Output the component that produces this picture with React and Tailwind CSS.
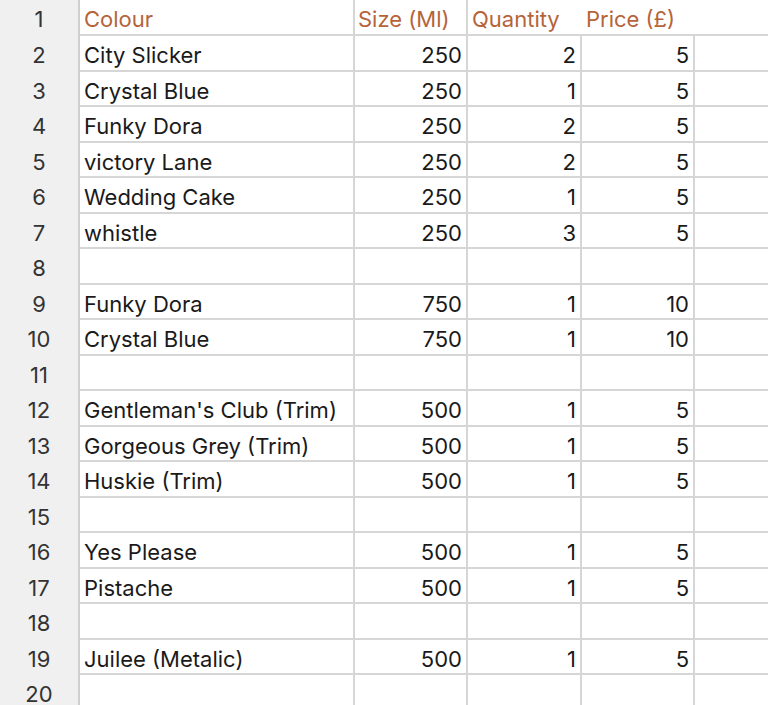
import React from 'react';

const rows = [
  ['Colour', 'Size (Ml)', 'Quantity', 'Price (£)'],
  ['City Slicker', '250', '2', '5'],
  ['Crystal Blue', '250', '1', '5'],
  ['Funky Dora', '250', '2', '5'],
  ['victory Lane', '250', '2', '5'],
  ['Wedding Cake', '250', '1', '5'],
  ['whistle', '250', '3', '5'],
  ['', '', '', ''],
  ['Funky Dora', '750', '1', '10'],
  ['Crystal Blue', '750', '1', '10'],
  ['', '', '', ''],
  ["Gentleman's Club (Trim)", '500', '1', '5'],
  ['Gorgeous Grey (Trim)', '500', '1', '5'],
  ['Huskie (Trim)', '500', '1', '5'],
  ['', '', '', ''],
  ['Yes Please', '500', '1', '5'],
  ['Pistache', '500', '1', '5'],
  ['', '', '', ''],
  ['Juilee (Metalic)', '500', '1', '5'],
  ['', '', '', ''],
];

const App = () => {
  return (
    <div className="w-[768px] h-[705px] overflow-hidden bg-white font-['Inter',sans-serif] text-[22px] text-[#1a1a1a]">
      {rows.map((r, i) => {
        const head = i === 0;
        return (
          <div
            key={i}
            className={`grid grid-cols-[80px_275px_113px_114px_113px_1fr] border-b-2 border-[#d6d6d6] ${head ? 'h-[36px]' : 'h-[35.5px]'}`}
          >
            <div className="flex items-center justify-center pt-[3px] bg-[#f0f0f0] border-r-2 border-[#cfcfcf] text-[#333]">
              {i + 1}
            </div>
            {head ? (
              <>
                <div className="flex items-center pt-[3px] pl-[4px] border-r-2 border-[#d6d6d6] text-[#b5643a]">{r[0]}</div>
                <div className="flex items-center pt-[3px] pl-[3px] border-r-2 border-[#d6d6d6] text-[#b5643a] whitespace-nowrap">{r[1]}</div>
                <div className="flex items-center pt-[3px] pl-[4px] text-[#b5643a] whitespace-nowrap">{r[2]}</div>
                <div className="flex items-center pt-[3px] pl-[4px] text-[#b5643a] whitespace-nowrap">{r[3]}</div>
                <div></div>
              </>
            ) : (
              <>
                <div className="flex items-center pt-[3px] pl-[4px] border-r-2 border-[#d6d6d6] whitespace-nowrap">{r[0]}</div>
                <div className="flex items-center justify-end pt-[3px] pr-[4px] border-r-2 border-[#d6d6d6]">{r[1]}</div>
                <div className="flex items-center justify-end pt-[3px] pr-[4px] border-r-2 border-[#d6d6d6]">{r[2]}</div>
                <div className="flex items-center justify-end pt-[3px] pr-[4px] border-r-2 border-[#d6d6d6]">{r[3]}</div>
                <div></div>
              </>
            )}
          </div>
        );
      })}
    </div>
  );
};

export default App;
